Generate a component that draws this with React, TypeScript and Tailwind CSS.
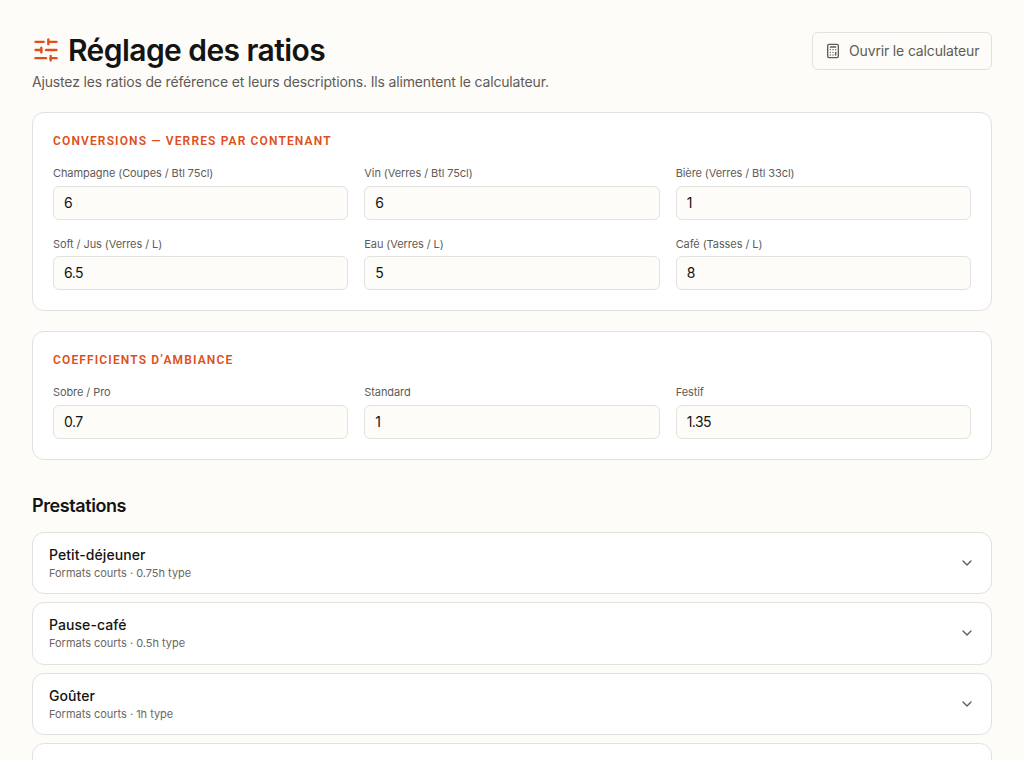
import { useState } from "react";
import { Calculator, ChevronDown, SlidersHorizontal } from "lucide-react";

type Ratio = { label: string; value: string };

const CONVERSIONS: Ratio[] = [
  { label: "Champagne (Coupes / Btl 75cl)", value: "6" },
  { label: "Vin (Verres / Btl 75cl)", value: "6" },
  { label: "Bière (Verres / Btl 33cl)", value: "1" },
  { label: "Soft / Jus (Verres / L)", value: "6.5" },
  { label: "Eau (Verres / L)", value: "5" },
  { label: "Café (Tasses / L)", value: "8" },
];

const AMBIANCES: Ratio[] = [
  { label: "Sobre / Pro", value: "0.7" },
  { label: "Standard", value: "1" },
  { label: "Festif", value: "1.35" },
];

const PRESTATIONS = [
  { name: "Petit-déjeuner", detail: "Formats courts · 0.75h type" },
  { name: "Pause-café", detail: "Formats courts · 0.5h type" },
  { name: "Goûter", detail: "Formats courts · 1h type" },
  { name: "", detail: "" },
];

function RatioField({ label, value }: Ratio) {
  const [current, setCurrent] = useState(value);

  return (
    <label className="block">
      <span className="block text-[11px] leading-[16.5px] tracking-[-0.008em] text-[#5f5b57] whitespace-nowrap">{label}</span>
      <input
        value={current}
        inputMode="decimal"
        onChange={(e) => setCurrent(e.target.value)}
        className="mt-1 block w-full rounded-md border border-[#e1e1de] bg-[#fdfcf8] px-2.5 py-1.5 text-sm tracking-[-0.04em] text-[#141412] outline-none focus:border-[#e04e1b]"
      />
    </label>
  );
}

function RatioCard({ title, ratios }: { title: string; ratios: Ratio[] }) {
  return (
    <section className="mt-5 rounded-xl border border-[#e1e1de] bg-white p-5">
      <h2 className="mb-4 font-['Roboto','Liberation_Sans',sans-serif] text-xs font-semibold uppercase tracking-[0.095em] text-[#e04e1b]">
        {title}
      </h2>
      <div className="grid grid-cols-3 gap-4">
        {ratios.map((r) => (
          <RatioField key={r.label} {...r} />
        ))}
      </div>
    </section>
  );
}

export default function App() {
  return (
    <div className="h-screen overflow-hidden bg-[#fdfcf8] p-8 font-['Inter','Liberation_Sans',sans-serif] text-[#141412]">
      <header className="flex items-start justify-between">
        <div>
          <h1 className="flex items-center gap-2 text-3xl font-semibold tracking-[-0.019em] whitespace-nowrap">
            <SlidersHorizontal className="size-7 text-[#e04e1b]" />
            Réglage des ratios
          </h1>
          <p className="mt-1 text-sm tracking-[-0.0115em] text-[#5f5b57] whitespace-nowrap">
            Ajustez les ratios de référence et leurs descriptions. Ils alimentent le calculateur.
          </p>
        </div>
        <button className="flex w-[180px] items-center gap-2 rounded-md border border-[#e1e1de] px-3 py-2 text-sm tracking-[-0.011em] text-[#5f5b57] whitespace-nowrap">
          <Calculator className="size-4 shrink-0" />
          Ouvrir le calculateur
        </button>
      </header>

      <RatioCard title="Conversions — verres par contenant" ratios={CONVERSIONS} />
      <RatioCard title="Coefficients d’ambiance" ratios={AMBIANCES} />

      <section className="mt-8">
        <h2 className="mb-3 text-lg font-semibold tracking-[-0.023em]">Prestations</h2>
        <div className="space-y-2">
          {PRESTATIONS.map((p) => (
            <button
              key={p.name}
              className="flex min-h-[62.5px] w-full items-center justify-between rounded-xl border border-[#e1e1de] bg-white px-4 py-3 text-left"
            >
              <span>
                <span className="block text-sm font-medium tracking-[0.005em]">{p.name}</span>
                <span className="block text-[11px] leading-[16.5px] tracking-[-0.002em] text-[#6b6763]">{p.detail}</span>
              </span>
              <ChevronDown className="size-4 text-[#5f5b57]" />
            </button>
          ))}
        </div>
      </section>
    </div>
  );
}
